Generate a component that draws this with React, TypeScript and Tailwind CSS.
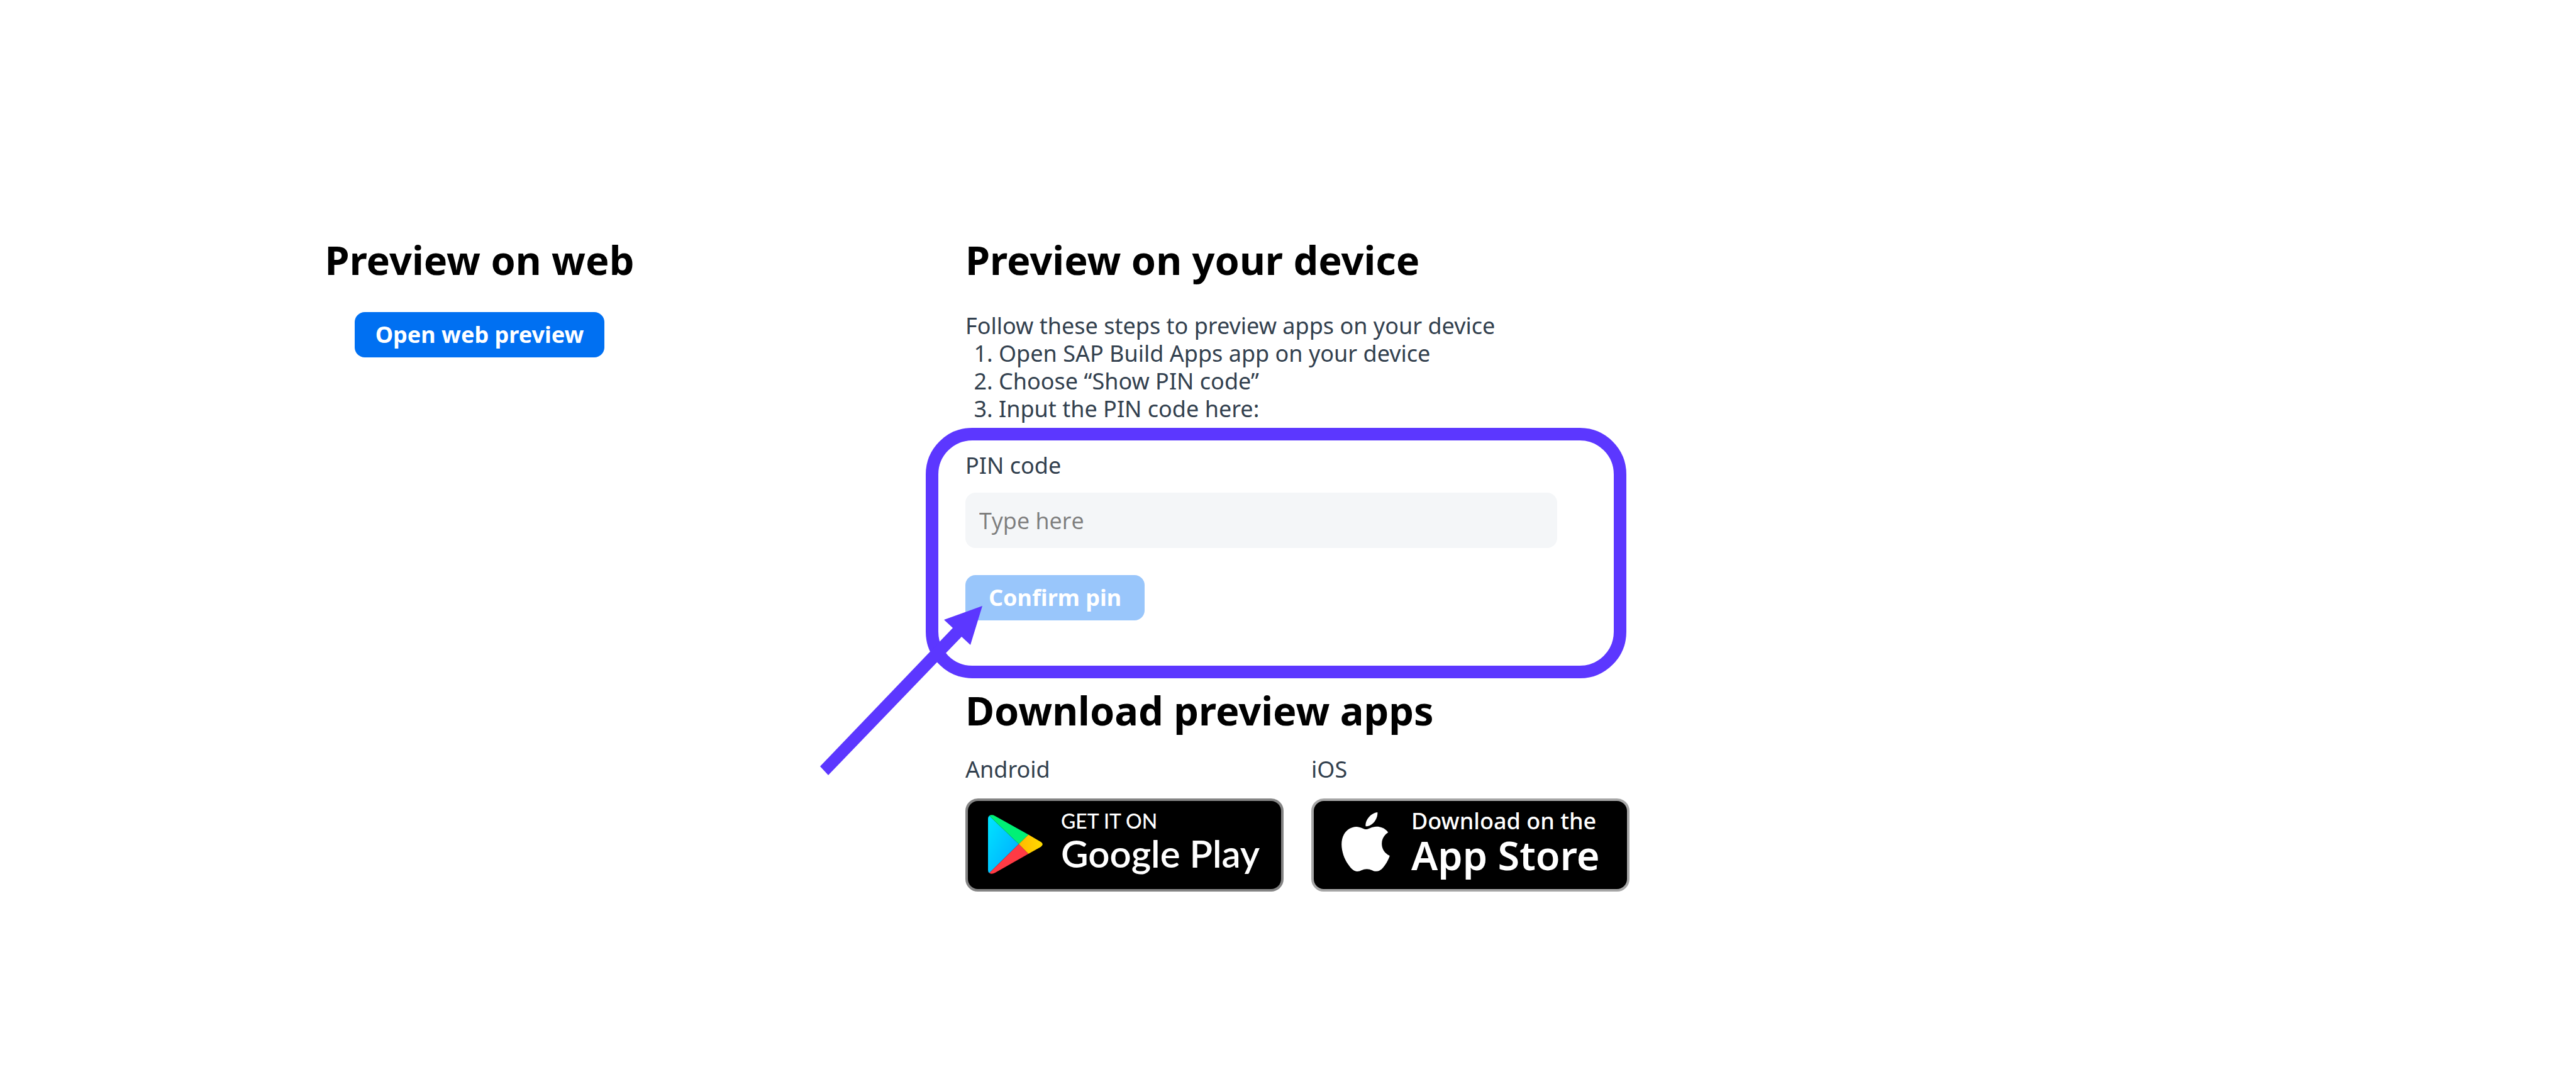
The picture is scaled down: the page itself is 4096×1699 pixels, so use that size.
import React from "react";

function PlayLogo() {
  return (
    <svg className="h-[94px] w-[87px] shrink-0" viewBox="0 0 87 94" aria-hidden="true">
      <defs>
        <linearGradient id="playBlue" x1="0" y1="0" x2="0.8" y2="0.8">
          <stop offset="0" stopColor="#00e5ff" />
          <stop offset="1" stopColor="#00b4ff" />
        </linearGradient>
        <linearGradient id="playYellow" x1="0" y1="0" x2="1" y2="0">
          <stop offset="0" stopColor="#ffb800" />
          <stop offset="1" stopColor="#ffdc00" />
        </linearGradient>
      </defs>
      <path d="M2 1.5Q0 3 0 6V88Q0 91 2 92.5L49 46.5Z" fill="url(#playBlue)" />
      <path d="M2 1.5Q6-1 11 1.8L64.3 31.6L49 46.5Z" fill="#00f076" />
      <path d="M2 92.5Q6 95 11 92.2L64.3 62L49 46.5Z" fill="#ff3a44" />
      <path d="M64.3 31.6L83 42.4Q90.5 46.8 83 51.4L64.3 62L49 46.5Z" fill="url(#playYellow)" />
    </svg>
  );
}

function AppleLogo() {
  return (
    <svg className="h-[94px] w-[77px] shrink-0" viewBox="2.2 0 19.6 24" fill="#ffffff" aria-hidden="true">
      <path d="M12.152 6.896c-.948 0-2.415-1.078-3.96-1.04-2.04.027-3.91 1.183-4.961 3.014-2.117 3.675-.546 9.103 1.519 12.09 1.013 1.454 2.208 3.09 3.792 3.039 1.52-.065 2.09-.987 3.935-.987 1.831 0 2.35.987 3.96.948 1.637-.026 2.676-1.48 3.676-2.948 1.156-1.688 1.636-3.325 1.662-3.415-.039-.013-3.182-1.221-3.22-4.857-.026-3.04 2.48-4.494 2.597-4.559-1.429-2.09-3.623-2.324-4.39-2.376-2-.156-3.675 1.09-4.61 1.09z" />
      <path d="M16.8 0C16.9 1.5 16.3 2.9 15.5 3.9C14.6 5 13.3 5.8 12 5.7C11.8 4.3 12.5 2.9 13.3 2C14.2 .9 15.6 .1 16.8 0Z" />
    </svg>
  );
}

function Arrow() {
  return (
    <svg
      className="pointer-events-none absolute top-[245px] left-[-231px] h-[269px] w-[258px]"
      viewBox="1304 963 258 269"
      fill="#5c37ff"
      aria-hidden="true"
    >
      <path d="M1562 963L1501 985L1515 998L1304 1218L1317 1232L1529 1012L1543 1025Z" />
    </svg>
  );
}

function Heading({ children }: { children: React.ReactNode }) {
  return <h2 className="text-[63px] leading-[84px] font-bold text-black">{children}</h2>;
}

export default function App() {
  return (
    <main className="grid min-h-screen grid-cols-[1525fr_2571fr] bg-white pt-[371px] pb-20 font-['Noto_Sans',sans-serif] text-[36px] leading-[44px] text-[#32404e]">
      <section className="flex flex-col items-center">
        <Heading>Preview on web</Heading>
        <button
          type="button"
          className="mt-[41px] h-[72px] rounded-2xl bg-[#0070f2] px-[33px] font-bold text-white"
        >
          Open web preview
        </button>
      </section>

      <section className="pl-[10px]">
        <Heading>Preview on your device</Heading>
        <p className="mt-[41px]">Follow these steps to preview apps on your device</p>
        <ol className="list-decimal pl-[53px]">
          <li>Open SAP Build Apps app on your device</li>
          <li>Choose “Show PIN code”</li>
          <li>Input the PIN code here:</li>
        </ol>

        <form className="relative mt-[46px] w-[941px]">
          <label htmlFor="pin" className="block">
            PIN code
          </label>
          <input
            id="pin"
            type="text"
            placeholder="Type here"
            className="mt-[21px] block h-[88px] w-full rounded-2xl bg-[#f4f6f8] px-[22px] font-['Open_Sans',sans-serif] placeholder:text-[#7d7d7d]"
          />
          <button
            type="button"
            disabled
            className="mt-[43px] block h-[72px] rounded-2xl bg-[#99c6fb] px-[37px] font-bold text-white"
          >
            Confirm pin
          </button>
          <div className="pointer-events-none absolute -top-[38px] -right-[110px] -bottom-[92px] -left-[63px] rounded-[74px] border-20 border-[#5c37ff]" />
          <Arrow />
        </form>

        <div className="mt-[101px]">
          <Heading>Download preview apps</Heading>
          <div className="mt-[30px] flex gap-11">
            <div>
              <p>Android</p>
              <a
                href="#android"
                className="mt-6 flex h-[148px] w-[506px] rounded-[20px] border-4 border-[#858585] bg-black pl-8 font-[Lato,sans-serif] text-white"
              >
                <span className="mt-[22px]">
                  <PlayLogo />
                </span>
                <span className="mt-[14px] ml-[29px] flex flex-col whitespace-nowrap">
                  <span className="text-[32px] leading-9 font-medium">GET IT ON</span>
                  <span className="text-[60px] leading-[66px] font-semibold">Google Play</span>
                </span>
              </a>
            </div>
            <div>
              <p>iOS</p>
              <a
                href="#ios"
                className="mt-6 flex h-[148px] w-[506px] rounded-[20px] border-4 border-[#a6a6a6] bg-black pl-11 text-white"
              >
                <span className="mt-[18px]">
                  <AppleLogo />
                </span>
                <span className="mt-3 ml-[34px] flex flex-col whitespace-nowrap">
                  <span className="text-[36px] leading-10 font-medium">Download on the</span>
                  <span className="text-[63px] leading-[68px] font-semibold">App Store</span>
                </span>
              </a>
            </div>
          </div>
        </div>
      </section>
    </main>
  );
}
